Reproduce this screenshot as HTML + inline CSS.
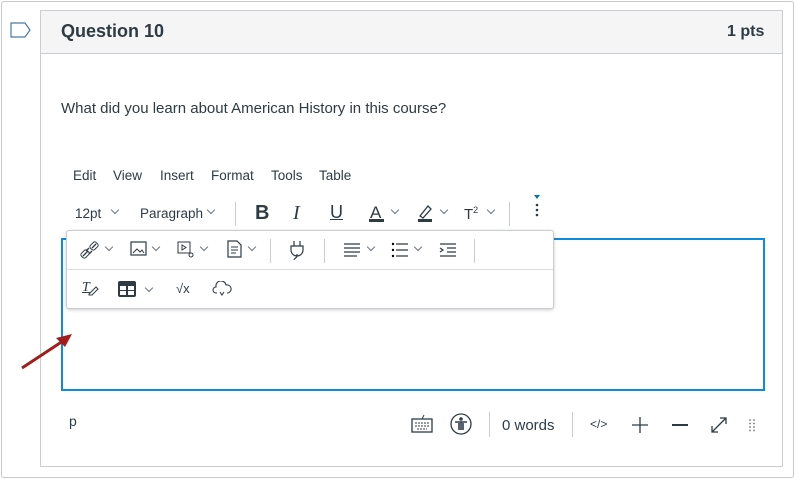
<!DOCTYPE html>
<html><head><style>
*{box-sizing:border-box;margin:0;padding:0}
body{width:795px;height:479px;background:#fff;font-family:"Liberation Sans",sans-serif;color:#2d3b45;position:relative;overflow:hidden}
.abs{position:absolute}
.frame{left:1px;top:1px;width:793px;height:477px;border:1px solid #c8c8c8;border-radius:3px}
.q{left:40px;top:10px;width:743px;height:457px;border:1px solid #c7cdd1}
.hd{left:41px;top:11px;width:741px;height:43px;background:#f5f5f5;border-bottom:1px solid #c7cdd1}
.t{font-size:15px}
.menu span{position:absolute;top:168px;font-size:13.5px;color:#2d3b45}
.chev{display:inline-block;width:6px;height:6px;border-right:1px solid #6b7780;border-bottom:1px solid #6b7780;transform:rotate(45deg);position:absolute}
.sep{position:absolute;width:1px;background:#c7cdd1}
svg{position:absolute}
</style></head><body>
<div class="abs frame"></div>
<svg style="left:10px;top:22px" width="22" height="16"><path d="M1 1H15L20 8L15 15H1Z" fill="none" stroke="#4a7aa0" stroke-width="1.2"/></svg>
<div class="abs q"></div>
<div class="abs hd"></div>
<div class="abs" style="left:61px;top:21px;font-size:18px;font-weight:bold;color:#2d3b45">Question 10</div>
<div class="abs" style="left:727px;top:23px;font-size:16px;font-weight:bold;color:#2d3b45">1 pts</div>
<div class="abs t" style="left:61px;top:100px">What did you learn about American History in this course?</div>
<div class="menu"><span style="left:73px">Edit</span><span style="left:113px">View</span><span style="left:160px">Insert</span><span style="left:211px">Format</span><span style="left:271px">Tools</span><span style="left:319px">Table</span></div>
<div class="abs" style="left:75px;top:206px;font-size:13.5px">12pt</div><i class="chev" style="left:112px;top:207px"></i>
<div class="abs" style="left:140px;top:206px;font-size:13.5px">Paragraph</div><i class="chev" style="left:208px;top:207px"></i>
<div class="sep" style="left:235px;top:202px;height:24px"></div>
<div class="abs" style="left:255px;top:202px;font-size:20px;font-weight:bold">B</div>
<div class="abs" style="left:293px;top:202px;font-size:20px;font-family:'Liberation Serif';font-style:italic">I</div>
<div class="abs" style="left:330px;top:202px;font-size:18px;text-decoration:underline">U</div>
<div class="abs" style="left:370px;top:203px;font-size:17px">A</div><div class="abs" style="left:369px;top:219px;width:15px;height:3px;background:#2d3b45"></div><i class="chev" style="left:392px;top:207px"></i>
<svg style="left:416px;top:203px" width="20" height="20"><path d="M4 13L12 3L15 6L7 15Z" fill="none" stroke="#2d3b45" stroke-width="1.3"/><rect x="2" y="16" width="14" height="3" fill="#2d3b45"/></svg><i class="chev" style="left:441px;top:207px"></i>
<div class="abs" style="left:464px;top:205px;font-size:15px">T<sup style="font-size:9px">2</sup></div><i class="chev" style="left:488px;top:207px"></i>
<div class="sep" style="left:509px;top:202px;height:24px"></div>
<svg style="left:533px;top:195px" width="8" height="30"><path d="M1 0H7L4 4Z" fill="#0374b5"/><circle cx="4" cy="10" r="1.3" fill="#2d3b45"/><circle cx="4" cy="15" r="1.3" fill="#2d3b45"/><circle cx="4" cy="20" r="1.3" fill="#2d3b45"/></svg>
<div class="abs" style="left:61px;top:238px;width:704px;height:153px;border:2px solid #0e8bd9"></div>
<div class="abs" style="left:66px;top:230px;width:488px;height:79px;background:#fff;border:1px solid #c7cdd1;border-radius:3px;box-shadow:0 1px 3px rgba(0,0,0,.2)"></div>
<div class="abs" style="left:67px;top:269px;width:486px;height:1px;background:#dcdfe2"></div>
<svg style="left:80px;top:240px" width="20" height="20"><path d="M3 16L8 11M12 8L16 4M6 11L9 8M9 14L12 11" fill="none" stroke="#2d3b45" stroke-width="1.3"/><rect x="2" y="10" width="6" height="8" rx="2" transform="rotate(45 5 14)" fill="none" stroke="#2d3b45"/><rect x="11" y="2" width="6" height="8" rx="2" transform="rotate(45 14 6)" fill="none" stroke="#2d3b45"/></svg><i class="chev" style="left:106px;top:244px"></i>
<svg style="left:130px;top:241px" width="18" height="16"><rect x="1" y="1" width="15" height="13" fill="none" stroke="#2d3b45" stroke-width="1.2"/><path d="M3 12L7 8L10 11L12 9L14 12" fill="none" stroke="#2d3b45"/></svg><i class="chev" style="left:153px;top:244px"></i>
<svg style="left:177px;top:241px" width="18" height="17"><rect x="1" y="1" width="12" height="11" fill="none" stroke="#2d3b45"/><path d="M5 4L9 6.5L5 9Z" fill="none" stroke="#2d3b45"/><circle cx="14" cy="14" r="2" fill="none" stroke="#2d3b45"/></svg><i class="chev" style="left:201px;top:244px"></i>
<svg style="left:227px;top:240px" width="16" height="18"><path d="M1 1H10L14 5V17H1Z" fill="none" stroke="#2d3b45" stroke-width="1.2"/><path d="M4 7H11M4 10H11M4 13H9" stroke="#2d3b45"/></svg><i class="chev" style="left:249px;top:244px"></i>
<div class="sep" style="left:270px;top:239px;height:24px"></div>
<svg style="left:289px;top:240px" width="16" height="20"><path d="M5 1V6M11 1V6M2 6H14V10A6 6 0 0 1 2 10Z M8 14V16C8 18 5 18 5 20" fill="none" stroke="#2d3b45" stroke-width="1.2"/></svg>
<div class="sep" style="left:324px;top:239px;height:24px"></div>
<svg style="left:343px;top:242px" width="18" height="16"><path d="M1 2H17M1 6H17M1 10H17M1 14H14" stroke="#2d3b45" stroke-width="1.2"/></svg><i class="chev" style="left:368px;top:244px"></i>
<svg style="left:391px;top:242px" width="18" height="16"><path d="M5 2H17M5 8H17M5 14H17" stroke="#2d3b45" stroke-width="1.2"/><circle cx="2" cy="2" r="1.2"/><circle cx="2" cy="8" r="1.2"/><circle cx="2" cy="14" r="1.2"/></svg><i class="chev" style="left:415px;top:244px"></i>
<svg style="left:439px;top:242px" width="18" height="16"><path d="M1 2H17M8 6H17M8 10H17M1 14H17M1 6L4 8L1 10" fill="none" stroke="#2d3b45" stroke-width="1.2"/></svg>
<div class="sep" style="left:474px;top:239px;height:24px"></div>
<div class="abs" style="left:82px;top:280px;font-size:14px;font-family:'Liberation Serif';font-style:italic;text-decoration:underline;color:#2d3b45">T</div>
<svg style="left:87px;top:284px" width="12" height="12"><path d="M2 10L9 3L11 5L5 11H2Z" fill="none" stroke="#2d3b45"/></svg>
<svg style="left:118px;top:281px" width="18" height="16"><rect x="0" y="0" width="18" height="16" rx="2" fill="#2d3b45"/><rect x="2" y="5" width="6" height="4" fill="#fff"/><rect x="10" y="5" width="6" height="4" fill="#fff"/><rect x="2" y="10" width="6" height="4" fill="#fff"/><rect x="10" y="10" width="6" height="4" fill="#fff"/></svg><i class="chev" style="left:146px;top:285px"></i>
<div class="abs" style="left:176px;top:281px;font-size:13px">√x</div>
<svg style="left:212px;top:281px" width="20" height="16"><path d="M5 12H4A3 3 0 0 1 4 6A5 5 0 0 1 14 4A4 4 0 0 1 16 12H15M8 11L10 14L12 11" fill="none" stroke="#2d3b45" stroke-width="1.1"/></svg>
<svg style="left:20px;top:328px" width="55" height="42"><path d="M2 40L46 11" stroke="#a31c1c" stroke-width="3"/><path d="M52 6L36 10L45 19Z" fill="#a31c1c"/></svg>
<div class="abs" style="left:69px;top:413px;font-size:14px">p</div>
<svg style="left:411px;top:414px" width="22" height="20"><path d="M11 5L13 1" stroke="#2d3b45"/><rect x="1" y="5" width="20" height="13" fill="none" stroke="#2d3b45" stroke-width="1.3"/><path d="M4 9H18M4 12H18M6 15H16" stroke="#2d3b45" stroke-dasharray="2 1"/></svg>
<svg style="left:450px;top:413px" width="22" height="22"><circle cx="11" cy="11" r="10" fill="none" stroke="#2d3b45" stroke-width="1.3"/><circle cx="11" cy="6" r="1.8" fill="#2d3b45"/><path d="M5 9H17M11 9V17M9 10V17M13 10V17" stroke="#2d3b45" stroke-width="1.6"/></svg>
<div class="sep" style="left:489px;top:412px;height:25px"></div>
<div class="abs" style="left:502px;top:417px;font-size:15px">0 words</div>
<div class="sep" style="left:572px;top:412px;height:25px"></div>
<div class="abs" style="left:590px;top:417px;font-size:12px">&lt;/&gt;</div>
<svg style="left:631px;top:416px" width="18" height="18"><path d="M9 1V17M1 9H17" stroke="#2d3b45" stroke-width="1.3"/></svg>
<svg style="left:671px;top:416px" width="18" height="18"><path d="M1 9H17" stroke="#2d3b45" stroke-width="2"/></svg>
<svg style="left:710px;top:416px" width="18" height="18"><path d="M2 16L16 2M2 10V16H8M10 2H16V8" fill="none" stroke="#2d3b45" stroke-width="1.3"/></svg>
<svg style="left:748px;top:418px" width="8" height="16"><g fill="#6b7780"><circle cx="2" cy="2" r=".9"/><circle cx="6" cy="2" r=".9"/><circle cx="2" cy="5.5" r=".9"/><circle cx="6" cy="5.5" r=".9"/><circle cx="2" cy="9" r=".9"/><circle cx="6" cy="9" r=".9"/><circle cx="2" cy="12.5" r=".9"/><circle cx="6" cy="12.5" r=".9"/></g></svg>
</body></html>
